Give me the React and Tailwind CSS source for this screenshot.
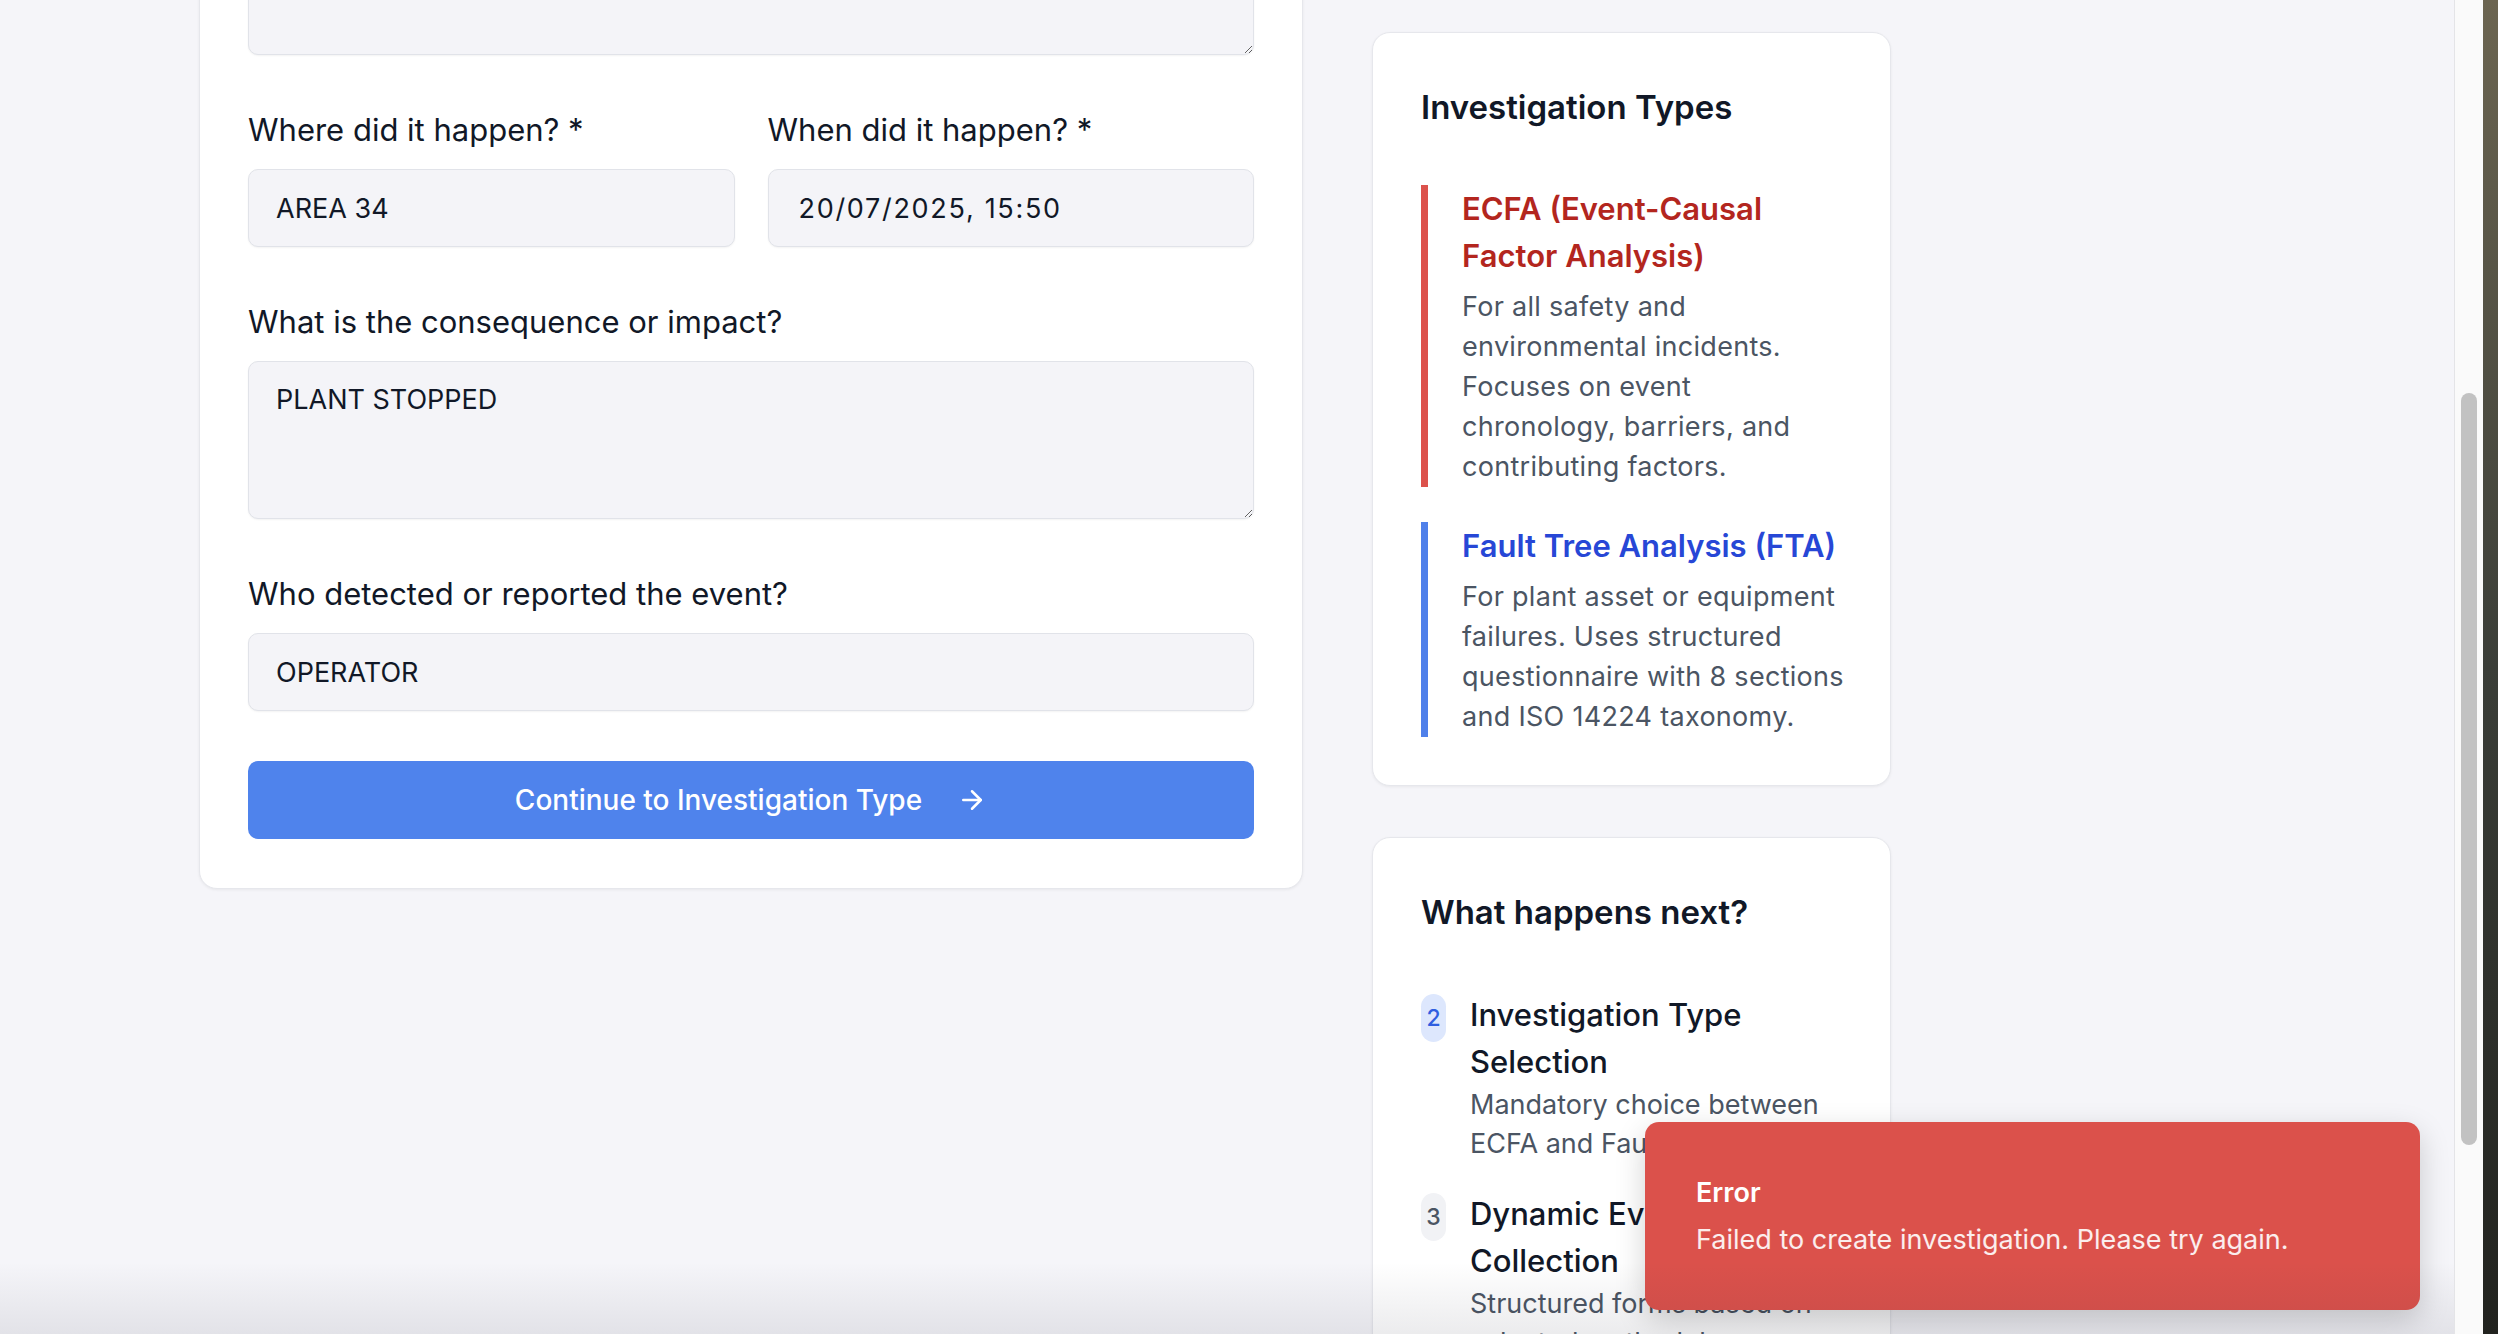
import { ArrowRight } from 'lucide-react'

function Label({ children }) {
  return <label className="block text-[31px] leading-[42px] font-normal text-[#111827] mb-[18px]">{children}</label>
}

const fieldCls =
  'block w-full rounded-[10px] border border-[#e1e3e9] bg-[#f4f4f8] text-[27px] text-[#111827] outline-none shadow-[0_1px_2px_rgba(0,0,0,0.05)] font-[Inter,sans-serif]'

function TypeBlock({ bar, titleColor, title, lines }) {
  return (
    <div className={`border-l-[7px] ${bar} pl-[34px]`}>
      <h3 className={`text-[31px] leading-[47px] font-semibold whitespace-nowrap ${titleColor}`}>
        {title.map((t, i) => (
          <span key={i} className="block">{t}</span>
        ))}
      </h3>
      <p className="mt-[8px] text-[27px] leading-[40px] tracking-[0.3px] text-[#4b5563] whitespace-nowrap">
        {lines.map((l, i) => (
          <span key={i} className="block">{l}</span>
        ))}
      </p>
    </div>
  )
}

function Step({ n, active, title, desc }) {
  return (
    <div className="flex gap-[24px]">
      <div
        className={`mt-[3px] w-[25px] h-[48px] shrink-0 rounded-full flex items-center justify-center text-[23px] font-medium ${
          active ? 'bg-[#dde7fd] text-[#2f5ee0]' : 'bg-[#f1f2f5] text-[#4b5563]'
        }`}
      >
        {n}
      </div>
      <div className="min-w-0">
        <h4 className="text-[31px] leading-[47px] font-medium text-[#111827] whitespace-nowrap">
          {title.map((t, i) => (
            <span key={i} className="block">{t}</span>
          ))}
        </h4>
        <p className="text-[27px] leading-[39px] text-[#4b5563] whitespace-nowrap">
          {desc.map((d, i) => (
            <span key={i} className="block">{d}</span>
          ))}
        </p>
      </div>
    </div>
  )
}

export default function App() {
  return (
    <div className="w-[2498px] h-[1334px] overflow-hidden flex bg-[#2a2b25] font-[Inter,sans-serif]">
      <div className="relative flex-1 overflow-hidden bg-[#f5f5f9]">
        <div className="flex items-start gap-[69px] pl-[199px]">
          {/* incident form */}
          <div className="w-[1104px] -mt-[200px] rounded-[18px] border border-[#e6e7ec] bg-white shadow-[0_1px_3px_rgba(0,0,0,0.06)] px-[48px] pt-[48px] pb-[49px] flex flex-col gap-[54px]">
            <textarea className={`${fieldCls} h-[206px] px-[27px] py-[18px] leading-[38px]`} defaultValue="" />

            <div className="grid grid-cols-2 gap-[33px]">
              <div>
                <Label>Where did it happen? *</Label>
                <input readOnly className={`${fieldCls} h-[78px] px-[27px]`} value="AREA 34" />
              </div>
              <div>
                <Label>When did it happen? *</Label>
                <input readOnly className={`${fieldCls} h-[78px] px-[30px] tracking-[1.7px]`} value="20/07/2025, 15:50" />
              </div>
            </div>

            <div>
              <Label>What is the consequence or impact?</Label>
              <textarea
                readOnly
                className={`${fieldCls} h-[158px] px-[27px] py-[19px] leading-[38px]`}
                defaultValue="PLANT STOPPED"
              />
            </div>

            <div>
              <Label>Who detected or reported the event?</Label>
              <input readOnly className={`${fieldCls} h-[78px] px-[27px]`} value="OPERATOR" />
            </div>

            <button className="-mt-[4px] h-[78px] w-full rounded-[10px] bg-[#4f83ec] text-white text-[28px] font-medium flex items-center justify-center gap-[35px]">
              Continue to Investigation Type
              <ArrowRight size={30} strokeWidth={2} />
            </button>
          </div>

          {/* sidebar */}
          <div className="w-[519px] mt-[32px] flex flex-col gap-[51px]">
            <div className="rounded-[18px] border border-[#e6e7ec] bg-white shadow-[0_1px_3px_rgba(0,0,0,0.06)] p-[48px]">
              <h2 className="text-[33px] leading-[52px] font-semibold text-[#111827]">Investigation Types</h2>
              <div className="mt-[52px] flex flex-col gap-[35px]">
                <TypeBlock
                  bar="border-[#dc524c]"
                  titleColor="text-[#b3261e]"
                  title={['ECFA (Event-Causal', 'Factor Analysis)']}
                  lines={[
                    'For all safety and',
                    'environmental incidents.',
                    'Focuses on event',
                    'chronology, barriers, and',
                    'contributing factors.',
                  ]}
                />
                <TypeBlock
                  bar="border-[#4f80ea]"
                  titleColor="text-[#2747d6]"
                  title={['Fault Tree Analysis (FTA)']}
                  lines={[
                    'For plant asset or equipment',
                    'failures. Uses structured',
                    'questionnaire with 8 sections',
                    'and ISO 14224 taxonomy.',
                  ]}
                />
              </div>
            </div>

            <div className="rounded-[18px] border border-[#e6e7ec] bg-white shadow-[0_1px_3px_rgba(0,0,0,0.06)] p-[48px]">
              <h2 className="text-[33px] leading-[52px] font-semibold text-[#111827]">What happens next?</h2>
              <div className="mt-[53px] flex flex-col gap-[27px]">
                <Step
                  n="2"
                  active
                  title={['Investigation Type', 'Selection']}
                  desc={['Mandatory choice between', 'ECFA and Fault Tree Analysis']}
                />
                <Step
                  n="3"
                  title={['Dynamic Evidence', 'Collection']}
                  desc={['Structured forms based on', 'selected methodology']}
                />
                <Step n="4" title={['Analysis & Report']} desc={['Root cause identification']} />
              </div>
            </div>
          </div>
        </div>

        {/* toast */}
        <div className="absolute right-[34px] bottom-[24px] w-[775px] rounded-[14px] bg-[#db514b] shadow-[0_10px_30px_rgba(0,0,0,0.18)] px-[51px] pt-[51px] pb-[50px] z-10">
          <div className="text-[27px] leading-[40px] font-semibold text-white">Error</div>
          <div className="mt-[7px] text-[27px] leading-[40px] text-white/90">
            Failed to create investigation. Please try again.
          </div>
        </div>

        {/* window bottom shade */}
        <div className="pointer-events-none absolute left-0 right-0 bottom-0 h-[72px] bg-linear-to-b from-transparent to-[rgba(40,40,60,0.09)] z-20" />
      </div>

      {/* scrollbar */}
      <div className="w-[29px] shrink-0 border-l border-[#e4e4e7] bg-[#fafafa] flex justify-center">
        <div className="mt-[393px] w-[16px] h-[752px] rounded-full bg-[#c2c2c2]" />
      </div>

      {/* desktop behind the window */}
      <div className="w-[15px] shrink-0 bg-linear-to-b from-[#6c6551] via-[#3b3e38] to-[#22231f]" />
    </div>
  )
}
